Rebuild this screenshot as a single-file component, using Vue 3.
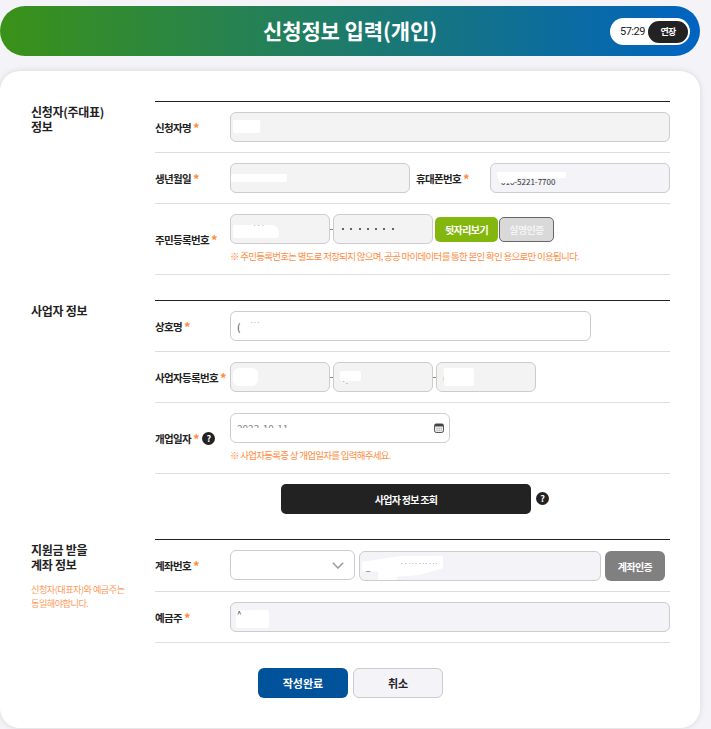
<template>
  <div class="page">
    <header class="topbar">
      <h1 class="topbar__title">신청정보 입력(개인)</h1>
      <div class="timer">
        <span class="timer__time">57:29</span>
        <button class="timer__btn" type="button">연장</button>
      </div>
    </header>

    <main class="card">
      <section class="group">
        <div class="group__head">
          <h2>신청자(주대표)<br />정보</h2>
        </div>
        <div class="group__body">
          <div class="row">
            <label class="row__label">신청자명<i>*</i></label>
            <div class="row__main">
              <div class="controls">
                <div class="field field--gray w-full"><span class="blob blob--a"></span></div>
              </div>
            </div>
          </div>
          <div class="row">
            <label class="row__label">생년월일<i>*</i></label>
            <div class="row__main">
              <div class="controls">
                <div class="field field--gray w-180"><span class="blob blob--b"></span></div>
                <label class="row__label row__label--inner">휴대폰번호<i>*</i></label>
                <div class="field field--lilac w-180">
                  <span class="field__text field__text--tiny">010-5221-7700</span>
                  <span class="blob blob--c"></span>
                </div>
              </div>
            </div>
          </div>
          <div class="row">
            <label class="row__label">주민등록번호<i>*</i></label>
            <div class="row__main">
              <div class="controls">
                <div class="field field--gray w-100">
                  <span class="blob blob--d"></span>
                  <span class="field__micro field__micro--id">· · ·</span>
                </div>
                <span class="dash"></span>
                <div class="field field--gray w-100">
                  <span class="dots">
                    <b v-for="n in 7" :key="n"></b>
                  </span>
                </div>
                <button class="btn btn--green" type="button">뒷자리보기</button>
                <button class="btn btn--off" type="button">실명인증</button>
              </div>
              <p class="hint">※ 주민등록번호는 별도로 저장되지 않으며, 공공 마이데이터를 통한 본인 확인 용으로만 이용됩니다.</p>
            </div>
          </div>
        </div>
      </section>

      <section class="group">
        <div class="group__head">
          <h2>사업자 정보</h2>
        </div>
        <div class="group__body">
          <div class="row">
            <label class="row__label">상호명<i>*</i></label>
            <div class="row__main">
              <div class="controls">
                <div class="field w-361">
                  <span class="field__text">(</span>
                  <span class="field__micro field__micro--name">···</span>
                </div>
              </div>
            </div>
          </div>
          <div class="row">
            <label class="row__label">사업자등록번호<i>*</i></label>
            <div class="row__main">
              <div class="controls">
                <div class="field field--gray w-100"><span class="blob blob--e"></span></div>
                <span class="dash"></span>
                <div class="field field--gray w-100">
                  <span class="blob blob--f"></span>
                  <span class="field__micro field__micro--biz">· .</span>
                </div>
                <span class="dash"></span>
                <div class="field field--gray w-100">
                  <span class="field__text">(</span>
                  <span class="blob blob--g"></span>
                </div>
              </div>
            </div>
          </div>
          <div class="row">
            <label class="row__label">개업일자<i>*</i><span class="help help--label">?</span></label>
            <div class="row__main">
              <div class="controls">
                <div class="field w-220">
                  <span class="field__text field__text--date">2023-10-11</span>
                  <span class="blob blob--h"></span>
                  <svg class="calendar" viewBox="0 0 10 10" width="10" height="10">
                    <rect x="0.6" y="1" width="8.8" height="8.4" rx="1.6" fill="none" stroke="#444" stroke-width="1" />
                    <rect x="0.6" y="1" width="8.8" height="2.6" rx="1" fill="#444" />
                    <path d="M2.5 5.2h1M4.6 5.2h1M6.7 5.2h1M2.5 7.2h1M4.6 7.2h1M6.7 7.2h1" stroke="#444" stroke-width="0.9" />
                  </svg>
                </div>
              </div>
              <p class="hint">※ 사업자등록증 상 개업일자를 입력해주세요.</p>
            </div>
          </div>
          <div class="lookup">
            <button class="btn btn--dark" type="button">사업자 정보 조회</button>
            <span class="help help--lookup">?</span>
          </div>
        </div>
      </section>

      <section class="group group--last">
        <div class="group__head">
          <h2>지원금 받을<br />계좌 정보</h2>
          <p class="group__note">신청자(대표자)와 예금주는<br />동일해야합니다.</p>
        </div>
        <div class="group__body">
          <div class="row">
            <label class="row__label">계좌번호<i>*</i></label>
            <div class="row__main">
              <div class="controls controls--bank">
                <div class="field w-125 field--select">
                  <svg viewBox="0 0 12 7" width="12" height="7">
                    <path d="M0.8 0.8 6 6 11.2 0.8" fill="none" stroke="#9a9a9a" stroke-width="1.5" />
                  </svg>
                </div>
                <div class="field field--lilac w-242 field--low">
                  <span class="blob blob--i"></span>
                  <span class="field__text field__text--low">_</span>
                  <span class="field__micro field__micro--acct">· · ··· ··· ···</span>
                </div>
                <button class="btn btn--gray" type="button">계좌인증</button>
              </div>
            </div>
          </div>
          <div class="row">
            <label class="row__label">예금주<i>*</i></label>
            <div class="row__main">
              <div class="controls">
                <div class="field field--lilac w-full">
                  <span class="blob blob--j"></span>
                  <span class="field__text field__text--caret">^</span>
                </div>
              </div>
            </div>
          </div>
        </div>
      </section>

      <div class="actions">
        <button class="action action--primary" type="button">작성완료</button>
        <button class="action" type="button">취소</button>
      </div>
    </main>
  </div>
</template>

<script setup>
</script>

<style>
html,
body {
  margin: 0;
  background: #f3f3f8;
}
</style>

<style scoped>
.page {
  box-sizing: border-box;
  width: 711px;
  height: 729px;
  overflow: hidden;
  padding: 6px 11px 0 0;
  background: #f3f3f8;
  font-family: "Noto Sans CJK KR", "Noto Sans", sans-serif;
  color: #222;
}

.topbar {
  position: relative;
  box-sizing: border-box;
  height: 50px;
  display: flex;
  align-items: center;
  justify-content: center;
  padding-bottom: 2px;
  border-radius: 25px;
  background: linear-gradient(90deg, #3a9217 0%, #0063c1 100%);
}

.topbar__title {
  margin: 0;
  font-size: 21px;
  font-weight: 700;
  letter-spacing: -0.1px;
  color: #fff;
}

.timer {
  position: absolute;
  top: 12px;
  right: 10px;
  box-sizing: border-box;
  width: 80px;
  height: 27px;
  display: flex;
  align-items: center;
  justify-content: space-between;
  padding: 0 2px 0 10px;
  border-radius: 14px;
  background: #fff;
}

.timer__time {
  font-family: Roboto, sans-serif;
  font-size: 11px;
  letter-spacing: -0.5px;
  color: #222;
}

.timer__btn {
  width: 40px;
  height: 22px;
  padding: 0;
  border: 0;
  border-radius: 11px;
  background: #222;
  color: #fff;
  font: 700 9px "Noto Sans CJK KR", sans-serif;
  letter-spacing: -0.7px;
}

.card {
  box-sizing: border-box;
  height: 657px;
  margin-top: 15px;
  padding: 30px 30px 0 31px;
  border-radius: 20px;
  background: #fff;
  box-shadow: 0 0 6px rgba(0, 0, 0, 0.12);
}

.group {
  display: grid;
  grid-template-columns: 124px 515px;
  margin-bottom: 25px;
}

.group__head h2 {
  margin: 3px 0 0;
  font-size: 12px;
  line-height: 15px;
  font-weight: 700;
  letter-spacing: -0.3px;
  color: #222;
}

.group__note {
  margin: 10px 0 0;
  font-size: 9.2px;
  line-height: 14px;
  letter-spacing: -0.55px;
  color: #ff9a5c;
}

.group__body {
  border-top: 1px solid #222;
}

.row {
  display: flex;
  align-items: center;
  padding: 10px 0;
  border-bottom: 1px solid #ddd;
}

.row__label {
  flex: none;
  width: 75px;
  display: flex;
  align-items: center;
  font-size: 10.5px;
  font-weight: 700;
  letter-spacing: -0.65px;
  color: #222;
  white-space: nowrap;
}

.row__label i {
  margin-left: 2px;
  font-style: normal;
  font-size: 13px;
  color: #ff8c42;
}

.row__label--inner {
  margin-left: 6px;
  width: 74px;
}

.row__main {
  flex: 1;
  min-width: 0;
}

.controls {
  display: flex;
  align-items: center;
}

.controls--bank {
  align-items: flex-start;
}

.field {
  position: relative;
  box-sizing: border-box;
  flex: none;
  height: 30px;
  display: flex;
  align-items: center;
  padding: 0 6px;
  border: 1px solid #ccc;
  border-radius: 6px;
  background: #fff;
  overflow: hidden;
}

.field--gray {
  background: #f3f3f3;
}

.field--lilac {
  background: #f3f3f8;
}

.field--select {
  justify-content: flex-end;
  padding-right: 10px;
}

.field--low {
  margin: 1px 4px 0;
}

.w-full { width: 100%; }
.w-361 { width: 361px; }
.w-220 { width: 220px; }
.w-180 { width: 180px; }
.w-125 { width: 125px; }
.w-242 { width: 242px; }
.w-100 { width: 100px; }

.field__text {
  font-size: 10px;
  color: #333;
  white-space: nowrap;
}

.field__text--tiny {
  position: relative;
  top: 3px;
  font-size: 8px;
  padding-left: 4px;
}

.field__text--date {
  color: #888;
}

.field__text--low {
  position: relative;
  top: 1px;
  font-size: 8px;
}

.field__text--caret {
  position: relative;
  top: -4px;
  font-size: 8px;
}

.field__micro {
  position: absolute;
  font-size: 6px;
  line-height: 8px;
  letter-spacing: -0.3px;
  color: #445;
  white-space: nowrap;
}

.field__micro--id { left: 22px; top: 7px; }
.field__micro--name { left: 19px; top: 7px; letter-spacing: 0; }
.field__micro--biz { left: 8px; top: 15px; }
.field__micro--acct { left: 40px; top: 8px; }

/* white masks over personal data in the original capture */
.blob {
  position: absolute;
  background: #fff;
  border-radius: 2px;
}

.blob--a { left: 2px; top: 7px; width: 27px; height: 13px; }
.blob--b { left: 0; top: 10px; width: 56px; height: 8px; }
.blob--c {
  left: 5px;
  top: 8px;
  width: 70px;
  height: 11px;
  clip-path: polygon(0 0, 100% 0, 100% 55%, 30% 55%, 25% 100%, 5% 100%);
}
.blob--d { left: 2px; top: 10px; width: 46px; height: 13px; border-radius: 2px 8px 4px 2px; }
.blob--e { left: 2px; top: 5px; width: 25px; height: 18px; border-radius: 6px; }
.blob--f { left: 6px; top: 8px; width: 21px; height: 10px; }
.blob--g { left: 7px; top: 5px; width: 30px; height: 18px; }
.blob--h { left: 6px; top: 14px; width: 60px; height: 10px; }
.blob--i {
  left: 2px;
  top: 4px;
  width: 81px;
  height: 24px;
  border-radius: 0;
  clip-path: polygon(0 24%, 47% 0, 100% 0, 100% 51%, 71% 79%, 43% 86%, 43% 100%, 20% 100%, 20% 65%, 0 65%);
}
.blob--j { left: 5px; top: 7px; width: 33px; height: 18px; }

.calendar {
  position: absolute;
  right: 5px;
  top: 9px;
}

.dash {
  flex: none;
  width: 3px;
  height: 1px;
  background: #888;
}

.dots {
  display: flex;
  gap: 6.3px;
  padding-left: 2px;
}

.dots b {
  width: 2px;
  height: 2px;
  border-radius: 50%;
  background: #334;
}

.btn {
  flex: none;
  padding: 0;
  font: 700 10px "Noto Sans CJK KR", sans-serif;
  letter-spacing: -0.6px;
  border: 0;
  border-radius: 5px;
  color: #fff;
}

.btn--green {
  width: 63px;
  height: 25px;
  margin-left: 2px;
  background: #84b70e;
}

.btn--off {
  box-sizing: border-box;
  width: 55px;
  height: 25px;
  margin-left: 1px;
  border: 1px solid #666;
  background: #d9d9d9;
  color: #f4f4f4;
}

.btn--dark {
  width: 250px;
  height: 30px;
  background: #222;
  letter-spacing: -0.7px;
}

.btn--gray {
  width: 60px;
  height: 30px;
  margin-top: 1px;
  border-radius: 6px;
  background: #808080;
}

.hint {
  margin: 5px 0 0;
  font-size: 9.5px;
  line-height: 15px;
  letter-spacing: -0.72px;
  color: #ff8c42;
  white-space: nowrap;
}

.help {
  display: inline-flex;
  align-items: center;
  justify-content: center;
  width: 13px;
  height: 13px;
  border-radius: 50%;
  background: #222;
  color: #fff;
  font-size: 9px;
  font-weight: 700;
}

.help--label {
  margin-left: 3px;
}

.lookup {
  display: flex;
  align-items: flex-start;
  gap: 5px;
  padding: 10px 0 0 126px;
}

.help--lookup {
  margin-top: 8px;
}

.actions {
  display: flex;
  justify-content: center;
  gap: 5px;
}

.action {
  box-sizing: border-box;
  width: 90px;
  height: 30px;
  padding: 0;
  border: 1px solid #ccc;
  border-radius: 6px;
  background: #f3f3f8;
  color: #222;
  font: 700 11px "Noto Sans CJK KR", sans-serif;
}

.action--primary {
  border: 0;
  background: #00529b;
  color: #fff;
}
</style>
